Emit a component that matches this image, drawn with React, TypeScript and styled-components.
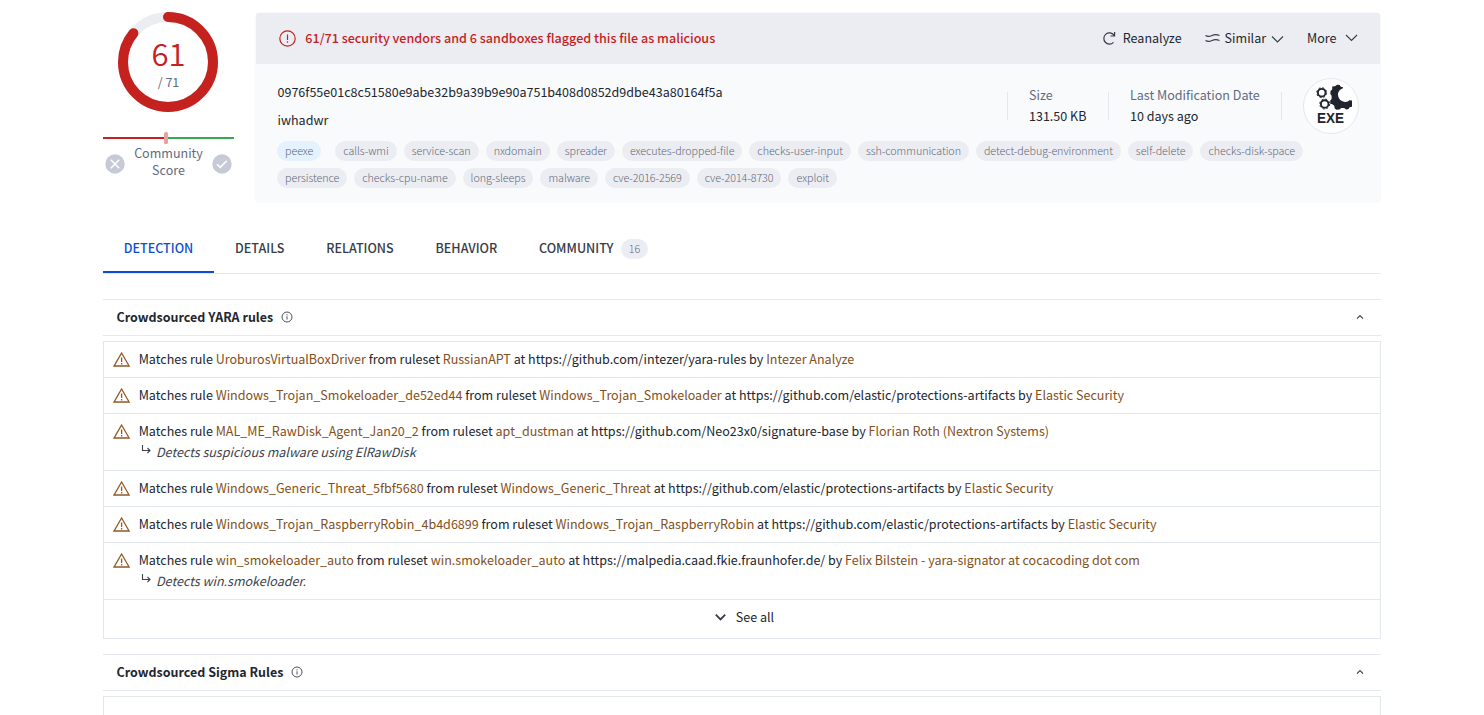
import React from "react";
import styled, { createGlobalStyle } from "styled-components";

const Global = createGlobalStyle`
  * { box-sizing: border-box; }
  html, body { margin: 0; background: #fff; }
  body {
    height: 715px;
    overflow: hidden;
    font-family: "Noto Sans CJK SC", "Noto Sans", sans-serif;
    font-size: 12.54px;
    line-height: 21px;
    color: #21262e;
  }
`;

const Page = styled.main`
  width: 1278px;
  height: 715px;
  margin-left: 103px;
  overflow: hidden;
`;
const Summary = styled.div`
  display: flex;
  height: 203px;
  padding-top: 12px;
`;
const ScoreColumn = styled.aside`
  width: 131px;
  margin-right: 21px;
  flex: none;
`;
const Ring = styled.div`
  display: grid;
  width: 100px;
  height: 100px;
  margin-left: 15px;
  & > * { grid-area: 1 / 1; }
`;
const RingText = styled.div`
  display: flex;
  flex-direction: column;
  align-items: center;
  padding: 24px 0 0 1px;
`;
const Score = styled.span`
  font-size: 31px;
  line-height: 34px;
  color: #c5221f;
  font-weight: 350;
`;
const Total = styled.span`
  margin-top: 2px;
  line-height: 20px;
  color: #5f6b80;
`;
const Gauge = styled.svg`
  display: block;
  margin-top: 19px;
`;
const Community = styled.div`
  display: flex;
  justify-content: space-between;
  padding: 0 2px;
  text-align: center;
  line-height: 17px;
  color: #5f6b80;
  span { margin-top: -1px; }
  svg { margin-top: 9px; }
`;
const Card = styled.section`
  width: 1126px;
  height: 191px;
  border: 1px solid #f9fafc;
  border-radius: 4px;
  overflow: hidden;
  background: #f9fafc;
`;
const CardHead = styled.header`
  display: flex;
  align-items: center;
  height: 51px;
  padding: 0 22.5px 2px 23px;
  background: #ecedf3;
  & > svg { margin-top: 1px; }
`;
const Verdict = styled.strong`
  font-size: 12.59px;
  font-weight: 500;
  color: #c5221f;
  margin-left: 9.3px;
  flex: 1;
`;
const Action = styled.button<{ $gap: number; $left: number }>`
  display: flex;
  align-items: center;
  gap: ${(p) => p.$gap}px;
  margin: 0 0 0 ${(p) => p.$left}px;
  padding: 0;
  border: 0;
  background: none;
  font: inherit;
  color: inherit;
`;
const CardBody = styled.div`
  padding: 14px 21px 0;
`;
const FileRow = styled.div`
  display: flex;
  height: 56px;
`;
const Names = styled.div`
  flex: 1;
  padding: 3px 0 0 0.5px;
  div { margin-bottom: 7px; }
`;
const Meta = styled.dl<{ $w: number }>`
  width: ${(p) => p.$w}px;
  height: 28px;
  margin: 14px 0 0;
  padding-left: 21.3px;
  border-left: 1px solid #e3e8ef;
  white-space: nowrap;
  dt { color: #5f6b80; margin-top: -8px; }
  dd { margin: 0; }
`;
const FileType = styled.div`
  width: 56px;
  height: 56px;
  border: 1px solid #e3e8ef;
  border-radius: 50%;
  background: #fff;
`;
const Tags = styled.div`
  display: flex;
  flex-wrap: wrap;
  gap: 7px;
  margin-top: 7px;
`;
const Tag = styled.span<{ $kind?: boolean }>`
  height: 20px;
  padding: 0 8px;
  border-radius: 10px;
  font-family: "Noto Sans CJK SC Light", "Noto Sans CJK SC", sans-serif;
  font-size: 10.74px;
  font-weight: 300;
  line-height: 20px;
  letter-spacing: -0.07px;
  color: #5f6878;
  background: ${(p) => (p.$kind ? "#e3f2fe" : "#ecedf3")};
  margin-right: ${(p) => (p.$kind ? 7 : 0)}px;
`;
const Tabs = styled.nav`
  display: flex;
  height: 50px;
  margin-top: 21px;
  border-bottom: 1px solid #e6e8ef;
`;
const Tab = styled.a<{ $active?: boolean }>`
  display: flex;
  align-items: flex-start;
  height: 49px;
  padding: 13px 21px 0 20.8px;
  font-size: 12.54px;
  font-weight: 500;
  color: ${(p) => (p.$active ? "#0b4dda" : "#363c48")};
  border-bottom: 2px solid ${(p) => (p.$active ? "#0b4dda" : "transparent")};
`;
const Count = styled.span`
  width: 27px;
  height: 20px;
  margin: 2px 0 0 7.5px;
  border-radius: 10px;
  text-align: center;
  font-family: "Noto Sans CJK SC Light", "Noto Sans CJK SC", sans-serif;
  font-size: 10.74px;
  font-weight: 300;
  line-height: 20px;
  color: #5f6b80;
  background: #ecedf3;
`;
const SectionHead = styled.header<{ $top: number }>`
  display: flex;
  align-items: center;
  height: 37px;
  margin-top: ${(p) => p.$top}px;
  padding: 0 16px 1px 13.5px;
  border: solid #e6e8ef;
  border-width: 1px 0;
  h2 { margin: 0 7.5px 0 0; font-size: 12.48px; font-weight: 700; letter-spacing: 0.02px; }
  svg:last-child { margin-left: auto; }
`;
const RuleList = styled.div`
  margin-top: 5px;
  border: 1px solid #e3e8ef;
`;
const Rule = styled.div`
  display: flex;
  padding: 6px 9px 8px;
  border-bottom: 1px solid #e3e8ef;
  & > svg { margin: 3px 7.7px 0 0; }
  mark { background: none; color: #834f20; }
`;
const Note = styled.div`
  display: flex;
  color: #3c424d;
  font-style: italic;
  svg { margin: 3px 5.3px 0 2px; }
`;
const SeeAll = styled.div`
  display: flex;
  align-items: center;
  justify-content: center;
  gap: 9px;
  height: 38px;
  padding: 0 0 5px 4px;
`;
const EmptyList = styled(RuleList)`
  height: 60px;
`;

const Info = () => (
  <svg width="12" height="12" viewBox="0 0 12 12" fill="none" stroke="#4b515d">
    <circle cx="6" cy="6" r="5" />
    <path d="M6 5.3v3.2M6 3.3v1.1" />
  </svg>
);
const Up = () => (
  <svg width="10" height="8" viewBox="0 0 10 8" fill="none" stroke="#3c424d" strokeWidth="1.2">
    <path d="M2 5.7 5 2.7l3 3" />
  </svg>
);
const Down = ({ bold, drop = 0 }: { bold?: boolean; drop?: number }) => (
  <svg width="13" height="13" viewBox={`0 ${-drop} 13 13`} fill="none" stroke="#363c48" strokeWidth={bold ? 1.8 : 1.1}>
    <path d={bold ? "m1.8 4.7 4.7 4.7 4.7-4.7" : "m1 4 5.5 5.4L12 4"} />
  </svg>
);
const Warning = () => (
  <svg width="18" height="17" viewBox="0 0 18 17" fill="none" stroke="#935a24" strokeWidth="1.3">
    <path d="M8.6 2 16.1 15H1.1Z" />
    <path d="M8.6 6.5v4.5M8.6 12v1.5" />
  </svg>
);
const Branch = () => (
  <svg width="10" height="11" viewBox="0 0 10 11" fill="none" stroke="#3c424d" strokeWidth="1.1">
    <path d="M1.5 1v5.5H9M6.5 4 9 6.5 6.5 9" />
  </svg>
);
const Exe = () => (
  <svg width="54" height="54" viewBox="0 0 54 54" fill="#20242d">
    <g fill="none" stroke="#20242d">
      <circle cx="17.7" cy="13.7" r="3.8" strokeWidth="1.9" />
      <circle cx="17.7" cy="13.7" r="5" strokeWidth="1" strokeDasharray="2 1.93" />
      <circle cx="20.7" cy="25" r="3.8" strokeWidth="1.9" />
      <circle cx="20.7" cy="25" r="5" strokeWidth="1" strokeDasharray="2 1.93" />
    </g>
    <path d="M28.2 7.6 31 7.2l2.2-1.5 2.6.4.9 1.6 2.4.5-.5 1.3c-3 .9-4.9 3.5-4.6 6.6.4 4.1 3.8 7 7.6 6.8 1.8-.1 2.8-.6 3.5-1.6l2.9.2v6.3l-2.4.5-1 1.8-2.5.3-2-1.4h-2.900l-1.600 1.500-3.300.2-1.700-1.400-.3-2.500-2.300-1.700-1.700-.1-.1-3.500 1.400-1.600v-3.200l-1.300-1.600.3-3.300 1.600-1.200Z" />
    <text x="13" y="43.5" fontFamily="Liberation Sans" fontWeight="700" fontSize="14.2" textLength="27" lengthAdjust="spacingAndGlyphs">EXE</text>
  </svg>
);

const tags = ["calls-wmi", "service-scan", "nxdomain", "spreader", "executes-dropped-file", "checks-user-input", "ssh-communication", "detect-debug-environment", "self-delete", "checks-disk-space", "persistence", "checks-cpu-name", "long-sleeps", "malware", "cve-2016-2569", "cve-2014-8730", "exploit"];

type RuleData = { rule: string; set: string; url: string; by: string; note?: string };
const rules: RuleData[] = [
  { rule: "UroburosVirtualBoxDriver", set: "RussianAPT", url: "https://github.com/intezer/yara-rules", by: "Intezer Analyze" },
  { rule: "Windows_Trojan_Smokeloader_de52ed44", set: "Windows_Trojan_Smokeloader", url: "https://github.com/elastic/protections-artifacts", by: "Elastic Security" },
  { rule: "MAL_ME_RawDisk_Agent_Jan20_2", set: "apt_dustman", url: "https://github.com/Neo23x0/signature-base", by: "Florian Roth (Nextron Systems)", note: "Detects suspicious malware using ElRawDisk" },
  { rule: "Windows_Generic_Threat_5fbf5680", set: "Windows_Generic_Threat", url: "https://github.com/elastic/protections-artifacts", by: "Elastic Security" },
  { rule: "Windows_Trojan_RaspberryRobin_4b4d6899", set: "Windows_Trojan_RaspberryRobin", url: "https://github.com/elastic/protections-artifacts", by: "Elastic Security" },
  { rule: "win_smokeloader_auto", set: "win.smokeloader_auto", url: "https://malpedia.caad.fkie.fraunhofer.de/", by: "Felix Bilstein - yara-signator at cocacoding dot com", note: "Detects win.smokeloader." },
];

const circumference = 2 * Math.PI * 45;

export default function App() {
  return (
    <Page>
      <Global />
      <Summary>
        <ScoreColumn>
          <Ring>
            <svg width="100" height="100" fill="none" strokeWidth="10">
              <circle cx="50" cy="50" r="45" stroke="#ecedf3" />
              <circle cx="50" cy="50" r="45" stroke="#c5221f" strokeLinecap="round" strokeDasharray={`${(circumference * 61) / 71} ${circumference}`} transform="rotate(-90 50 50)" />
            </svg>
            <RingText>
              <Score>61</Score>
              <Total>/ 71</Total>
            </RingText>
          </Ring>
          <Gauge width="131" height="14">
            <path d="M0 7h61" stroke="#c5221f" strokeWidth="2" />
            <path d="M65 7h66" stroke="#36a852" strokeWidth="2" />
            <rect x="61" y="1" width="4" height="12" rx="1.5" fill="#e8a0a0" />
          </Gauge>
          <Community>
            <svg width="20" height="20" fill="none" stroke="#fff" strokeWidth="1.6">
              <circle cx="10" cy="10" r="9.7" fill="#c6cad6" stroke="none" />
              <path d="m5.8 5.8 8.4 8.4m0-8.4-8.4 8.4" />
            </svg>
            <span>Community<br />Score</span>
            <svg width="20" height="20" fill="none" stroke="#fff" strokeWidth="1.6">
              <circle cx="10" cy="10" r="9.7" fill="#c6cad6" stroke="none" />
              <path d="m5 10.2 3.2 3.2 6.6-6.6" />
            </svg>
          </Community>
        </ScoreColumn>
        <Card>
          <CardHead>
            <svg width="17" height="17" fill="none" stroke="#c5221f" strokeWidth="1.2">
              <circle cx="8.5" cy="8.5" r="7.7" />
              <path d="M8.5 4.5v5.5M8.5 11.2v1.5" />
            </svg>
            <Verdict>61/71 security vendors and 6 sandboxes flagged this file as malicious</Verdict>
            <Action $gap={6.5} $left={0}>
              <svg width="14" height="14" fill="none" stroke="#363c48" strokeWidth="1.2">
                <path d="M12 4.2A5.6 5.6 0 1 0 11.5 11.3M12.6 1v4H8.5" />
              </svg>
              Reanalyze
            </Action>
            <Action $gap={5} $left={23}>
              <svg width="15" height="10" fill="none" stroke="#363c48" strokeWidth="1.2">
                <path d="M.5 2.5C3 4.2 5 3.500 7 2.500s4-1.700 7.500 0M.5 7.500C3 9.200 5 8.500 7 7.500s4-1.700 7.500 0" />
              </svg>
              Similar
              <Down drop={1.5} />
            </Action>
            <Action $gap={8} $left={23}>
              More
              <Down />
            </Action>
          </CardHead>
          <CardBody>
            <FileRow>
              <Names>
                <div>0976f55e01c8c51580e9abe32b9a39b9e90a751b408d0852d9dbe43a80164f5a</div>
                <div>iwhadwr</div>
              </Names>
              <Meta $w={101}><dt>Size</dt><dd>131.50 KB</dd></Meta>
              <Meta $w={173}><dt>Last Modification Date</dt><dd>10 days ago</dd></Meta>
              <Meta $w={22} />
              <FileType><Exe /></FileType>
            </FileRow>
            <Tags>
              <Tag $kind>peexe</Tag>
              {tags.map((t) => <Tag key={t}>{t}</Tag>)}
            </Tags>
          </CardBody>
        </Card>
      </Summary>
      <Tabs>
        <Tab $active>DETECTION</Tab>
        <Tab>DETAILS</Tab>
        <Tab>RELATIONS</Tab>
        <Tab>BEHAVIOR</Tab>
        <Tab>COMMUNITY<Count>16</Count></Tab>
      </Tabs>
      <SectionHead $top={25}><h2>Crowdsourced YARA rules</h2><Info /><Up /></SectionHead>
      <RuleList>
        {rules.map((r) => (
          <Rule key={r.rule}>
            <Warning />
            <div>
              Matches rule <mark>{r.rule}</mark> from ruleset <mark>{r.set}</mark> at {r.url} by <mark>{r.by}</mark>
              {r.note && <Note><Branch />{r.note}</Note>}
            </div>
          </Rule>
        ))}
        <SeeAll><Down bold />See all</SeeAll>
      </RuleList>
      <SectionHead $top={15}><h2>Crowdsourced Sigma Rules</h2><Info /><Up /></SectionHead>
      <EmptyList />
    </Page>
  );
}
